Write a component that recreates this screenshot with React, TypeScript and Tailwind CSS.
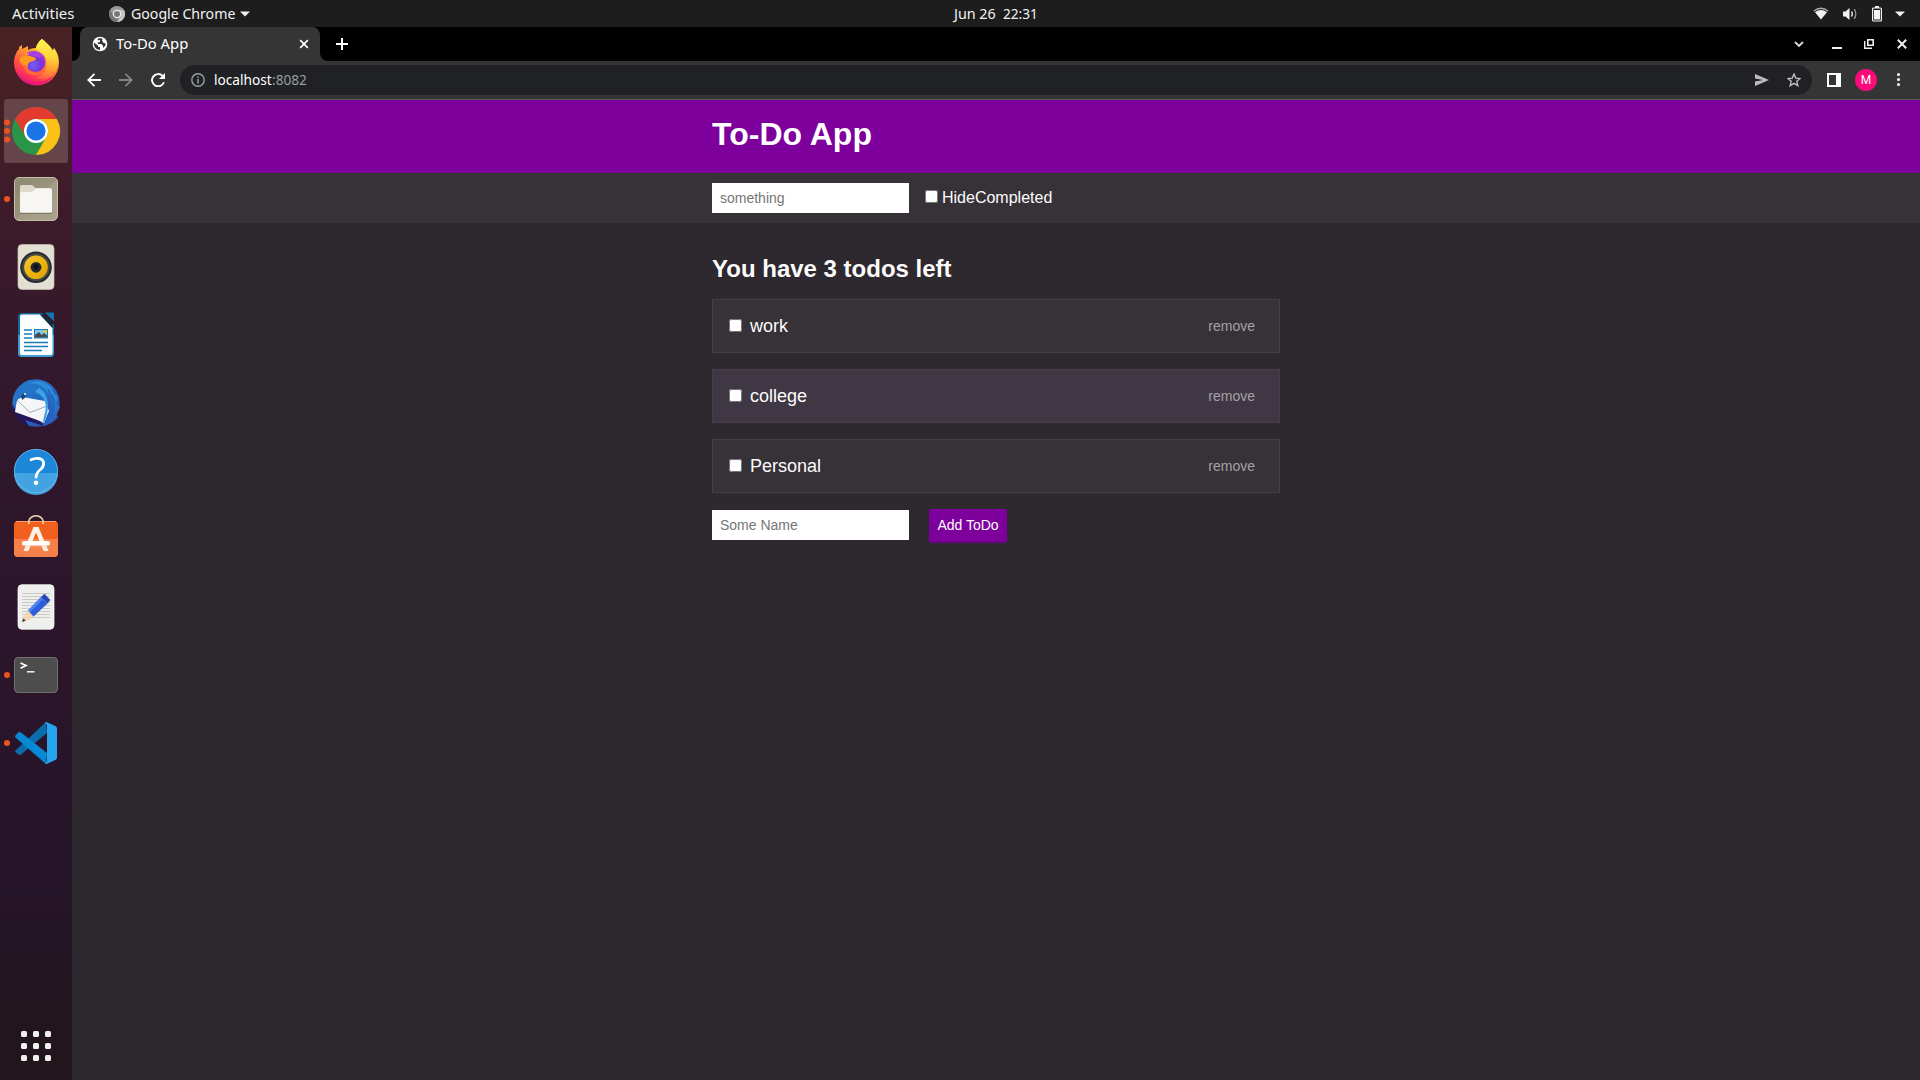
import React from "react";

const ui = "font-['Noto_Sans',sans-serif]";

function TopBar() {
  return (
    <div className={`flex h-[27px] w-full shrink-0 items-center bg-[#1d1d1d] text-[#f2f2f2] ${ui}`}>
      <div className="flex w-[954px] items-center pl-3">
        <Label text="Activities" width={62} size={14} />
        <svg className="ml-[35px]" width="16" height="16" viewBox="0 0 16 16">
          <circle cx="8" cy="8" r="8" fill="#9b9b9b" />
          <path d="M8 4H15A8 8 0 0 1 8 16L11.5 10Z" fill="#c4c4c4" />
          <path d="M1 4.2A8 8 0 0 0 8 16L10 12 5 10Z" fill="#777" />
          <circle cx="8" cy="8" r="3.6" fill="#777" stroke="#eee" strokeWidth="1.2" />
        </svg>
        <div className="ml-[6px]"><Label text="Google Chrome" width={104} size={14} /></div>
        <svg className="ml-[5px]" width="10" height="6" viewBox="0 0 10 6"><path d="M0 0.5H10L5 5.5Z" fill="#f2f2f2" /></svg>
      </div>
      <div className="flex gap-[7px]">
        <Label text="Jun 26" width={42} size={14} />
        <Label text="22:31" width={35} size={14} />
      </div>
      <div className="flex flex-1 items-center justify-end pr-[15px]">
        <svg width="16" height="14" viewBox="0 0 16 14">
          <path d="M0.8 4.3Q8 -1.8 15.2 4.3" fill="none" stroke="#aaa" strokeWidth="1.3" />
          <path d="M2 5.3Q8 0.8 14 5.3L8 12.6Z" fill="#f2f2f2" />
        </svg>
        <svg className="ml-[13px]" width="16" height="14" viewBox="0 0 16 14">
          <path d="M1 4.5H3.5L7.5 1V13L3.5 9.5H1Z" fill="#f2f2f2" />
          <path d="M9.5 4.5Q11.2 7 9.5 9.5" fill="none" stroke="#f2f2f2" strokeWidth="1.3" />
          <path d="M12.2 2.2Q15.4 7 12.2 11.8" fill="none" stroke="#999" strokeWidth="1.3" />
        </svg>
        <svg className="ml-[13px]" width="12" height="16" viewBox="0 0 12 16">
          <path d="M4 0H8V2H4Z" fill="#f2f2f2" />
          <rect x="1.6" y="2" width="8.8" height="13" rx="1" fill="none" stroke="#f2f2f2" strokeWidth="1.2" />
          <rect x="3" y="4" width="6" height="9.5" fill="#f2f2f2" />
        </svg>
        <svg className="ml-[12px]" width="10" height="6" viewBox="0 0 10 6"><path d="M0 0.5H10L5 5.5Z" fill="#f2f2f2" /></svg>
      </div>
    </div>
  );
}

/** Single line of text fitted to a fixed advance width. */
function Label({ text, width, size, color = "#f2f2f2", weight = 400 }: { text: string; width: number; size: number; color?: string; weight?: number }) {
  const ref = React.useRef<HTMLSpanElement>(null);
  const [scale, setScale] = React.useState(1);
  React.useLayoutEffect(() => {
    if (ref.current) setScale(width / ref.current.offsetWidth);
  }, [width]);
  return (
    <span className="mb-0.5 block shrink-0 whitespace-nowrap" style={{ width }}>
      <span ref={ref} className="inline-block origin-left leading-5" style={{ transform: `scaleX(${scale})`, fontSize: size, color, fontWeight: weight }}>
        {text}
      </span>
    </span>
  );
}

function Firefox() {
  return (
    <>
      <defs>
        <linearGradient id="ffBody" x1="0.8" y1="0" x2="0.3" y2="1">
          <stop offset="0" stopColor="#fff44f" /><stop offset="0.3" stopColor="#ffb62c" /><stop offset="0.55" stopColor="#ff7139" /><stop offset="0.8" stopColor="#ff3750" /><stop offset="1" stopColor="#e31587" />
        </linearGradient>
        <radialGradient id="ffGlobe" cx="0.4" cy="0.65" r="0.65"><stop offset="0" stopColor="#7a5cf5" /><stop offset="0.6" stopColor="#7437d8" /><stop offset="1" stopColor="#a52fd4" /></radialGradient>
        <linearGradient id="ffTail" x1="0.5" y1="0" x2="0.4" y2="1"><stop offset="0" stopColor="#fff44f" /><stop offset="0.45" stopColor="#ffd43a" /><stop offset="0.75" stopColor="#ff9a33" /><stop offset="1" stopColor="#ff5a45" /></linearGradient>
      </defs>
      <path d="M38 8C44 13 47 16 49 20L50 17C54 22 55 27 55 32A22.5 22.5 0 0 1 10 32C10 26 12 21 15 18V16L18 14V18L24 15V19C28 17 31 17 32 17C33 14 35 10 38 8Z" fill="url(#ffBody)" />
      <path d="M38 8C44 13 47 16 49 20L50 17C55 25 56 36 49 44C44 48 38 49 32 47C43 43 45 32 40 24L32 18C32 14 35 10 38 8Z" fill="url(#ffTail)" />
      <circle cx="31.5" cy="31" r="10" fill="url(#ffGlobe)" />
      <path d="M23 22C28 18 38 20 41 27L36 25C37 27 38 28 38 28C34 26 30 25 28 25Z" fill="#a93fe0" />
      <path d="M16 27C21 23 28 25 32 27C32 29 30 30 26 31C24 32 23 34 24 37C18 35 15 31 16 27Z" fill="#ff9a1f" />
      <path d="M22 34C24 42 34 44 41 39C37 47 20 46 19 34Z" fill="#ff6a39" />
      <path d="M12 40C20 52 38 55 50 44C45 52 38 54 32 54C23 54 15 49 12 40Z" fill="#e5187b" opacity=".75" />
    </>
  );
}

function Chrome() {
  return (
    <>
      <circle cx="32" cy="32" r="24" fill="#2a9447" />
      <path d="M11.2 20A24 24 0 0 1 52.8 20H32A12 12 0 0 0 21.6 38Z" fill="#e23a2e" />
      <path d="M52.8 20A24 24 0 0 1 32 56L42.4 38A12 12 0 0 0 32 20Z" fill="#fbc116" />
      <circle cx="32" cy="32" r="12" fill="#fff" />
      <circle cx="32" cy="32" r="9.6" fill="#1b73e8" />
    </>
  );
}

function Files() {
  return (
    <>
      <defs><linearGradient id="flBg" x1="0" y1="0" x2="1" y2="1"><stop stopColor="#8f8870" /><stop offset=".5" stopColor="#9a937b" /><stop offset=".51" stopColor="#a39c85" /><stop offset="1" stopColor="#aaa48f" /></linearGradient></defs>
      <rect x="10.5" y="10.5" width="43" height="43" rx="4.5" fill="url(#flBg)" stroke="#c5beaa" />
      <path d="M16 20Q16 18 18 18H28L31.5 21H46Q48 21 48 23V30H16Z" fill="#dedacb" />
      <path d="M16 27Q16 25 18 25H28L32 21.5H46Q48 21.5 48 23.5V44Q48 46 46 46H18Q16 46 16 44Z" fill="#f7f6f3" />
      <path d="M16.5 46.3H47.5" stroke="#756e58" />
    </>
  );
}

function Music() {
  return (
    <>
      <defs><linearGradient id="muY" x1="0" y1="0" x2="1" y2="1"><stop stopColor="#f2c33a" /><stop offset=".5" stopColor="#eeb50c" /><stop offset="1" stopColor="#d99f05" /></linearGradient></defs>
      <rect x="14" y="9.5" width="36" height="45" rx="4" fill="#e4dfd3" stroke="#c9c2b3" strokeWidth=".7" />
      <circle cx="32" cy="32.3" r="15.8" fill="#252c35" />
      <circle cx="32" cy="32.3" r="13.7" fill="#4a4a43" />
      <circle cx="32" cy="32.3" r="11.8" fill="url(#muY)" />
      <circle cx="32" cy="32.3" r="5.4" fill="#202832" />
      <circle cx="32" cy="31.8" r="2.6" fill="#0d1114" />
    </>
  );
}

function Writer() {
  return (
    <>
      <path d="M18 10H38L50 22V50Q50 54 46 54H18Q14 54 14 50V14Q14 10 18 10Z" fill="#0f679c" />
      <path d="M14 32H50V50Q50 54 46 54H18Q14 54 14 50Z" fill="#3e9ad0" />
      <path d="M18 11.5H36L48.5 25V50Q48.5 52 46.5 52H18Q16 52 16 50V13.5Q16 11.5 18 11.5Z" fill="#fbfdfe" />
      <path d="M36 11.5L48.5 25V20L40 11.5Z" fill="#122d40" />
      <path d="M41 9.5H50V18.5Z" fill="#1177ab" />
      <path d="M20 27H28M20 31H28M20 35H28M20 39.5H44M20 43.5H44M20 47.5H38" stroke="#1b7db8" strokeWidth="1.7" />
      <rect x="30" y="26" width="14" height="9.5" fill="#1b7db8" />
      <rect x="31" y="27" width="12" height="7.5" fill="#85c7ed" />
      <path d="M31 34.5V32L35 29L37.5 32L40 30L43 32.5V34.5Z" fill="#434b4f" />
      <path d="M39.5 27H43V30Q40 30 39.5 27Z" fill="#f5cd20" />
    </>
  );
}

function Thunderbird() {
  return (
    <>
      <defs>
        <linearGradient id="tbB" x1="0" y1="0" x2="1" y2="1"><stop stopColor="#2f7dd1" /><stop offset=".5" stopColor="#2368c0" /><stop offset="1" stopColor="#3346a8" /></linearGradient>
        <linearGradient id="tbW" x1="0.3" y1="0" x2="0.7" y2="1"><stop stopColor="#2f8fdc" /><stop offset=".5" stopColor="#2a86d6" /><stop offset="1" stopColor="#2b55b8" /></linearGradient>
      </defs>
      <circle cx="32" cy="32" r="23.7" fill="url(#tbB)" />
      <path d="M8.3 33C9 44 15 52 25 55.5L21 49L40 55Q34 46 12 40Z" fill="#251457" />
      <path d="M11 41L13 29L18 26L41 30L45 40L40 52L36 50Z" fill="#f5f6f8" />
      <path d="M13 29L26 41.5L43 35" fill="none" stroke="#99a2ae" strokeWidth=".9" />
      <path d="M9 31C10 20 17 12 26 8.5L25 10C33 8 41 12 44 18L43 32C38 24 30 22 25 23L18 27Q14 26 12 31Z" fill="#2373c8" />
      <path d="M24 13C33 11 43 16 46 26C49 38 44 49 38 55C45 55 52 49 54 46L52.5 43L56 36L53 33L54 26L50 22L47 16C40 9 30 9 24 13Z" fill="url(#tbW)" />
      <path d="M35 17C42 21 46 31 43 43L40 52C37 49 44 40 41 31C39 25 35 22 31 21Z" fill="#3da4e4" />
      <path d="M44 18Q52 34 44 49M48 24Q53 34 47 46" fill="none" stroke="#1f60bd" strokeWidth="1.3" />
      <path d="M17 24L22 21.5Q23 26 18 29Z" fill="#20427e" /><circle cx="21" cy="23" r="1.1" fill="#dff" />
    </>
  );
}

function Help() {
  return (
    <>
      <circle cx="32" cy="32" r="22" fill="#1c86d8" />
      <path d="M10 34H54A22 22 0 0 1 10 34Z" fill="#43a2e2" />
      <circle cx="32" cy="32" r="21.6" fill="none" stroke="#6fbcec" strokeWidth=".8" />
      <path d="M27 20.8Q30 19.3 33 19.3C41 19.3 41 26.3 37 30Q32.5 33.5 32 38" fill="none" stroke="#fff" strokeWidth="2.8" strokeLinecap="round" />
      <circle cx="32" cy="43.8" r="2.3" fill="#fff" />
    </>
  );
}

function Software() {
  return (
    <>
      <rect x="10" y="14" width="44" height="36" rx="4" fill="#f2601f" />
      <path d="M10 32H54V46Q54 50 50 50H14Q10 50 10 46Z" fill="#f6804a" />
      <path d="M12 14.5H52" stroke="#ff9a6c" />
      <path d="M24.7 17V15A7.3 6.3 0 0 1 39.3 15V17" fill="none" stroke="#f5d9ab" strokeWidth="1.6" />
      <path d="M29.5 20H34.5L44.5 44H39.5L32 25.5L24.5 44H19.5Z" fill="#fff0e6" />
      <rect x="18" y="34" width="28" height="4.6" rx="2.2" fill="#fff" />
      <path d="M20 38.9H44" stroke="#f8cbb4" strokeWidth=".8" />
    </>
  );
}

function Editor() {
  return (
    <>
      <rect x="14" y="9.7" width="36" height="44.6" rx="4" fill="#efefee" stroke="#fff" strokeWidth=".7" />
      <path d="M18 18.5H46M18 21.5H46M18 24.5H46M18 27.5H46M18 30.5H46M18 33.5H46M18 36.5H46M18 39.5H46M18 42.5H46" stroke="#c4c4c4" strokeWidth=".9" />
      <path d="M18 47L21 38.5L27 44Z" fill="#f4d6b4" />
      <path d="M18 47L19.2 43.5L21.8 45.5Z" fill="#333" />
      <path d="M23.5 36L37 22L43.5 28.5L29 42Z" fill="#2c5ed8" />
      <path d="M23.5 36L37 22L39 24L25.5 38Z" fill="#4d84ef" />
      <path d="M37 22L40.5 18.8L46.3 25L43.5 28.5Z" fill="#2449b8" />
      <path d="M24 35.5L29.5 41.5L27 44L21.4 38.5Z" fill="#f4d6b4" />
    </>
  );
}

function Terminal() {
  return (
    <>
      <rect x="10.5" y="14.5" width="43" height="35" rx="3.5" fill="#4d4d4d" stroke="#71716f" />
      <path d="M16.5 20L22 22.6L16.5 25.2" fill="none" stroke="#fff" strokeWidth="1.7" />
      <path d="M23 28.8H30.5" stroke="#fff" strokeWidth="1.4" />
    </>
  );
}

function Code() {
  return (
    <>
      <path d="M11.5 39.5L42 11L43 22L17 43.5Q15.5 44.4 14.2 43.2L11.6 41.2Q10.7 40.3 11.5 39.5Z" fill="#0b6dab" />
      <path d="M11.5 24.5L14.2 21.6Q15.5 20.5 17 21.6L43 42L42 53L11.5 26.5Q10.7 25.4 11.5 24.5Z" fill="#078ad6" />
      <path d="M42.5 11L51.8 15.3Q53 16 53 17.4V46.6Q53 48 51.8 48.7L42.5 53L41 52.5L43 50V14L41 11.5Z" fill="#27a3ef" />
    </>
  );
}

const apps: { icon: () => React.ReactElement; dots: number[]; active?: boolean }[] = [
  { icon: Firefox, dots: [] },
  { icon: Chrome, dots: [23.5, 32, 40.5], active: true },
  { icon: Files, dots: [32] },
  { icon: Music, dots: [] },
  { icon: Writer, dots: [] },
  { icon: Thunderbird, dots: [] },
  { icon: Help, dots: [] },
  { icon: Software, dots: [] },
  { icon: Editor, dots: [] },
  { icon: Terminal, dots: [32] },
  { icon: Code, dots: [32] },
];

function Dock() {
  return (
    <div className="flex w-[72px] shrink-0 flex-col items-center gap-1 bg-[linear-gradient(180deg,#492224_0%,#3b1a2a_20%,#30172c_40%,#2b152b_60%,#26152a_80%,#22151f_92%,#22161c_100%)] pt-1">
      {apps.map(({ icon: Icon, dots, active }, i) => (
        <div key={i} className={active ? "h-16 w-16 rounded-[3px] bg-[#654549]" : "h-16 w-16"}>
          <svg width="64" height="64" viewBox="0 0 64 64">
            {dots.map((y) => <circle key={y} cx="3" cy={y} r="3" fill="#e95420" />)}
            <Icon />
          </svg>
        </div>
      ))}
      <div className="mt-auto mb-[19px] grid grid-cols-3 gap-1.5">
        {Array.from({ length: 9 }, (_, i) => <div key={i} className="size-1.5 rounded-[1.5px] bg-[#f0f0ee]" />)}
      </div>
    </div>
  );
}

function TabStrip() {
  return (
    <div className="flex h-[34px] shrink-0 bg-black">
      <div className="flex w-2 items-end bg-[#353535]"><div className="h-full w-full rounded-br-lg bg-black" /></div>
      <div className="w-[240px] bg-black">
        <div className={`flex h-full items-center rounded-t-lg bg-[#353535] pl-3 pr-[11px] ${ui}`}>
          <svg width="16" height="16" viewBox="0 0 16 16">
            <circle cx="8" cy="8" r="7.3" fill="#fff" />
            <path d="M1.8 6.5L6 9.5V11H8V14Q3 13.5 2 9ZM6.5 2.3Q5 3.5 6 4.2L8 4V6L5.8 6.5V8H9.5L11 9.8V12Q13.8 10 13.8 7.5L11.5 7L10 4.5L10.7 2.8Q8.5 1.8 6.5 2.3Z" fill="#353535" />
          </svg>
          <div className="ml-2"><Label text="To-Do App" width={72} size={14} color="#fff" /></div>
          <svg className="ml-auto" width="10" height="10" viewBox="0 0 10 10"><path d="M1.2 1.2L8.8 8.8M8.8 1.2L1.2 8.8" stroke="#fff" strokeWidth="1.7" /></svg>
        </div>
      </div>
      <div className="w-2 bg-[#353535]"><div className="h-full w-full rounded-bl-lg bg-black" /></div>
      <svg className="ml-2 self-center" width="12" height="12" viewBox="0 0 12 12"><path d="M6 0V12M0 6H12" stroke="#fff" strokeWidth="2" /></svg>
      <div className="ml-auto flex items-center pr-[13px]">
        <svg width="10" height="7" viewBox="0 0 10 7"><path d="M1 1L5 5L9 1" fill="none" stroke="#ddd" strokeWidth="1.8" /></svg>
        <svg className="ml-7" width="10" height="10" viewBox="0 0 10 10"><path d="M0 9H10" stroke="#eee" strokeWidth="2" /></svg>
        <svg className="ml-[22px]" width="10" height="10" viewBox="0 0 10 10"><path d="M3.8 0.8H9.2V6.2H3.8Z" fill="none" stroke="#eee" strokeWidth="1.6" /><path d="M0.7 2V9.3H8" fill="none" stroke="#eee" strokeWidth="1.4" /></svg>
        <svg className="ml-[23px]" width="10" height="10" viewBox="0 0 10 10"><path d="M0.8 0.8L9.2 9.2M9.2 0.8L0.8 9.2" stroke="#eee" strokeWidth="2" /></svg>
      </div>
    </div>
  );
}

function Toolbar() {
  return (
    <div className="flex h-[39px] shrink-0 items-center border-b border-[#5c5c5c] bg-[#353535] pr-5 pb-px pl-[15px]">
      <svg width="14" height="14" viewBox="0 0 14 14"><path d="M14 7H1.5M7.5 0.8L1.2 7L7.5 13.2" fill="none" stroke="#fff" strokeWidth="1.8" /></svg>
      <svg className="ml-[18px]" width="14" height="14" viewBox="0 0 14 14"><path d="M0 7H12.5M6.5 0.8L12.8 7L6.5 13.2" fill="none" stroke="#868686" strokeWidth="1.8" /></svg>
      <svg className="ml-[18px]" width="14" height="14" viewBox="0 0 14 14"><path d="M12.9 9.2A6.1 6.1 0 1 1 11.4 2.8L12.5 4" fill="none" stroke="#fff" strokeWidth="1.9" /><path d="M14 0V6H8Z" fill="#fff" /></svg>
      <div className={`ml-[15px] flex h-[30px] flex-1 items-center rounded-full bg-[#202124] pr-[11px] pl-[11px] ${ui}`}>
        <svg width="14" height="14" viewBox="0 0 14 14"><circle cx="7" cy="7" r="6.2" fill="none" stroke="#9aa0a6" strokeWidth="1.4" /><path d="M7 6V10.5M7 3.4V4.9" stroke="#9aa0a6" strokeWidth="1.5" /></svg>
        <div className="ml-[9px] flex">
          <Label text="localhost" width={57.5} size={14} color="#fff" />
          <Label text=":8082" width={35} size={14} color="#9a9da1" />
        </div>
        <svg className="ml-auto" width="14" height="12" viewBox="0 0 14 12"><path d="M0 0L14 6L0 12V7.4L8 6L0 4.6Z" fill="#bdbdbd" /></svg>
        <svg className="ml-[18px]" width="14" height="14" viewBox="0 0 24 24"><path d="M12 1.8L15 8.8L22.5 9.4L16.8 14.3L18.6 21.7L12 17.7L5.4 21.7L7.2 14.3L1.5 9.4L9 8.8Z" fill="none" stroke="#c2c2c2" strokeWidth="2.3" /></svg>
      </div>
      <svg className="ml-[15px]" width="14" height="14" viewBox="0 0 14 14"><path d="M0 0H14V14H0ZM2 2V12H9V2Z" fill="#fff" fillRule="evenodd" /></svg>
      <div className="ml-[14px] flex size-[22px] items-center justify-center rounded-full bg-[#fb0a7a] font-[Roboto,sans-serif] text-[12px] text-white">M</div>
      <div className="ml-5 flex flex-col gap-[2px]">
        <div className="size-[3px] rounded-full bg-white" /><div className="size-[3px] rounded-full bg-white" /><div className="size-[3px] rounded-full bg-white" />
      </div>
    </div>
  );
}

function Check() {
  return <input type="checkbox" className="m-0 block size-[13px] shrink-0" />;
}

function TodoPage() {
  return (
    <div className="flex-1 bg-[#2e292e] font-['Liberation_Sans',Arial,sans-serif] text-[#fcfcfc]">
      <header className="h-[73px] bg-[#7d009d] pt-4">
        <h1 className="mx-auto w-[568px] text-[32px] leading-[37px] font-bold text-white">To-Do App</h1>
      </header>
      <div className="h-[50px] bg-[#373138] pt-2.5">
        <div className="mx-auto flex w-[568px]">
          <input placeholder="something" className="h-[30px] w-[197px] bg-white px-2 text-sm text-black placeholder:text-[#757575]" />
          <div className="mt-[7px] ml-4 flex"><Check /><span className="-mt-px ml-1 text-base leading-[18px]">HideCompleted</span></div>
        </div>
      </div>
      <main className="mx-auto w-[568px] pt-8">
        <h2 className="text-2xl leading-[27px] font-bold">You have 3 todos left</h2>
        <div className="mt-[17px] flex flex-col gap-4">
          {["work", "college", "Personal"].map((t, i) => (
            <div key={t} className={`flex h-[54px] items-center border border-[#463f49] px-4 ${i % 2 ? "bg-[#403744]" : "bg-[#373138]"}`}>
              <div className="mb-px"><Check /></div>
              <span className="ml-2 text-lg leading-5">{t}</span>
              <button className="mr-2 ml-auto text-sm text-[#a5a1a7]">remove</button>
            </div>
          ))}
        </div>
        <div className="mt-4 flex items-start">
          <input placeholder="Some Name" className="mt-px h-[30px] w-[197px] bg-white px-2 text-sm text-black placeholder:text-[#757575]" />
          <button className="ml-5 h-[34px] w-[78px] border-b-2 border-[#6e008a] bg-[#7d009d] text-sm whitespace-nowrap">Add ToDo</button>
        </div>
      </main>
    </div>
  );
}

export default function App() {
  return (
    <div className="flex h-[1080px] w-[1920px] flex-col overflow-hidden">
      <TopBar />
      <div className="flex min-h-0 flex-1">
        <Dock />
        <div className="flex min-w-0 flex-1 flex-col">
          <TabStrip />
          <Toolbar />
          <TodoPage />
        </div>
      </div>
    </div>
  );
}
